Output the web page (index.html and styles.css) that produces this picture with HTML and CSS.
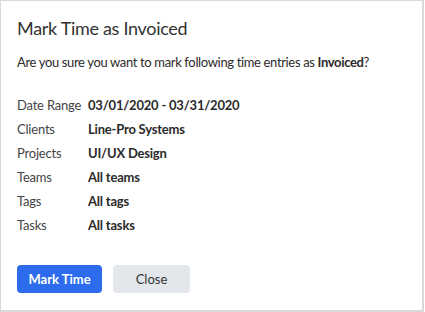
FILE: index.html
```html
<!DOCTYPE html>
<html lang="en">
<head>
    <meta charset="UTF-8">
    <meta name="viewport" content="width=device-width, initial-scale=1.0">
    <title>Mark Time as Invoiced</title>
    <link rel="stylesheet" href="styles.css">
</head>
<body>
    <div class="modal">
        <h1 class="modal-title">Mark Time as Invoiced</h1>
        <p class="modal-text">Are you sure you want to mark following time entries as <strong>Invoiced</strong>?</p>

        <dl class="details">
            <dt>Date Range</dt>
            <dd>03/01/2020 - 03/31/2020</dd>
            <dt>Clients</dt>
            <dd>Line-Pro Systems</dd>
            <dt>Projects</dt>
            <dd>UI/UX Design</dd>
            <dt>Teams</dt>
            <dd>All teams</dd>
            <dt>Tags</dt>
            <dd>All tags</dd>
            <dt>Tasks</dt>
            <dd>All tasks</dd>
        </dl>

        <div class="actions">
            <button type="button" class="btn btn-primary">Mark Time</button>
            <button type="button" class="btn btn-secondary">Close</button>
        </div>
    </div>
</body>
</html>
```

FILE: styles.css
```css
:root {
    --border-color: #d9d9d9;
    --text-dark: #2b2b2b;
    --text-label: #444;
    --primary: #2c6ced;
    --secondary-bg: #e3e7eb;
}

* {
    margin: 0;
    padding: 0;
    box-sizing: border-box;
}

body {
    font-family: 'Lato', sans-serif;
    color: var(--text-dark);
    background: #fff;
}

.modal {
    width: 424px;
    height: 312px;
    border: 2px solid var(--border-color);
    border-top-width: 1px;
    border-left-width: 1px;
    padding: 14px 16px 0;
}

.modal-title {
    font-size: 18px;
    font-weight: 400;
    line-height: 26px;
    letter-spacing: -0.3px;
    color: #333;
}

.modal-text {
    font-size: 13px;
    line-height: 20px;
    letter-spacing: -0.35px;
    margin-top: 11px;
}

.modal-text strong {
    font-weight: 700;
}

.details {
    display: grid;
    grid-template-columns: 71px 1fr;
    row-gap: 4px;
    margin-top: 23px;
    font-size: 13px;
    line-height: 20px;
    letter-spacing: -0.2px;
}

.details dt {
    color: var(--text-label);
}

.details dd {
    font-weight: 700;
}

.actions {
    display: flex;
    gap: 11px;
    margin-top: 30px;
}

.btn {
    font-family: 'Lato', sans-serif;
    font-size: 13px;
    font-weight: 700;
    height: 28px;
    border: none;
    border-radius: 4px;
    cursor: pointer;
}

.btn-primary {
    background: var(--primary);
    color: #fff;
    width: 85px;
}

.btn-secondary {
    background: var(--secondary-bg);
    color: #333;
    width: 77px;
    font-weight: 400;
}
```
